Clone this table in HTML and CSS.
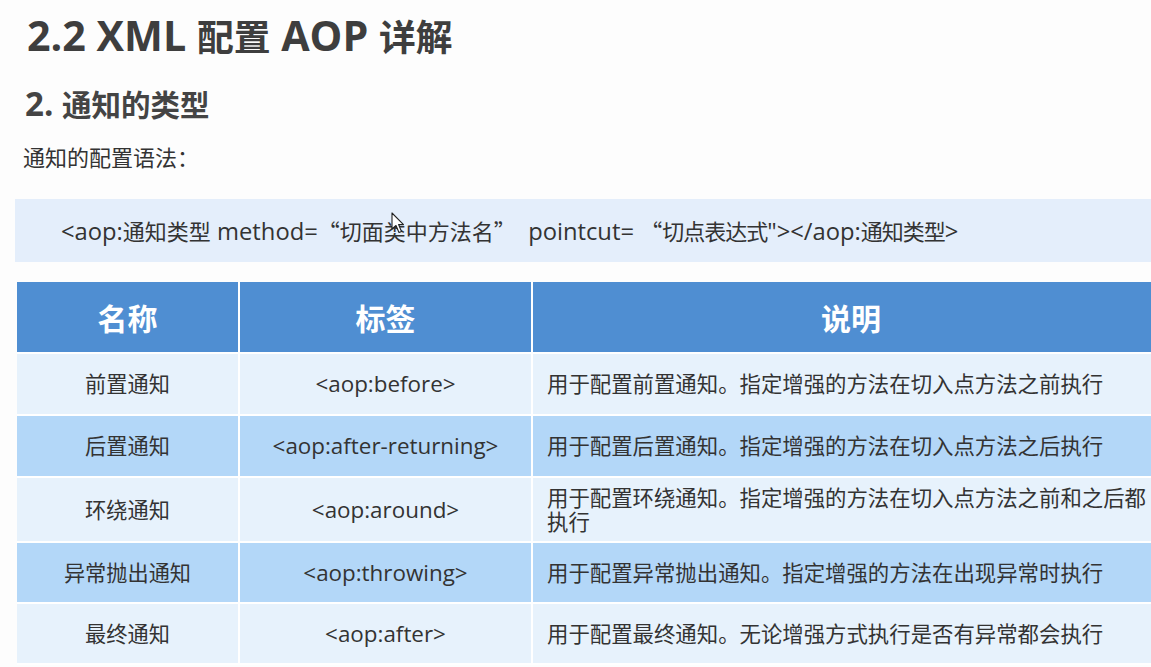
FILE: index.html
```html
<!DOCTYPE html>
<html lang="zh">
<head>
<meta charset="utf-8">
<title>2.2 XML 配置 AOP 详解</title>
<link rel="stylesheet" href="styles.css">
</head>
<body>
<div class="page">
  <h1 class="title"><span class="en">2.2 XML </span>配置<span class="en"> AOP </span>详解</h1>
  <h2 class="subtitle"><span class="en">2. </span>通知的类型</h2>
  <p class="lead">通知的配置语法：</p>
  <div class="code"><span class="en">&lt;aop:</span>通知类型<span class="en"> method=</span>“切面类中方法名”<span class="en">&nbsp; pointcut= </span>“<span class="tight">切点表达式</span><span class="en">"&gt;&lt;/aop:</span><span class="tight">通知类型</span><span class="en">&gt;</span></div>
  <table class="grid">
    <thead>
      <tr><th class="c1">名称</th><th class="c2">标签</th><th class="c3">说明</th></tr>
    </thead>
    <tbody>
      <tr class="light r1"><td>前置通知</td><td class="tag">&lt;aop:before&gt;</td><td class="desc">用于配置前置通知。指定增强的方法在切入点方法之前执行</td></tr>
      <tr class="dark r2"><td>后置通知</td><td class="tag">&lt;aop:after-returning&gt;</td><td class="desc">用于配置后置通知。指定增强的方法在切入点方法之后执行</td></tr>
      <tr class="light r3"><td>环绕通知</td><td class="tag">&lt;aop:around&gt;</td><td class="desc">用于配置环绕通知。指定增强的方法在切入点方法之前和之后都执行</td></tr>
      <tr class="dark r4"><td>异常抛出通知</td><td class="tag">&lt;aop:throwing&gt;</td><td class="desc">用于配置异常抛出通知。指定增强的方法在出现异常时执行</td></tr>
      <tr class="light r5"><td>最终通知</td><td class="tag">&lt;aop:after&gt;</td><td class="desc">用于配置最终通知。无论增强方式执行是否有异常都会执行</td></tr>
    </tbody>
  </table>
  <svg class="cursor" width="14" height="22" viewBox="0 0 14 22"><path d="M1 1 L1 17 L5 13.5 L8 20.5 L10.5 19.5 L7.6 12.6 L12.5 12.6 Z" fill="#fff" stroke="#222" stroke-width="1.1" stroke-linejoin="round"/></svg>
</div>
</body>
</html>
```
FILE: styles.css
```css
html, body {
  margin: 0;
  padding: 0;
  background: #fdfdfd;
  overflow: hidden;
}
body {
  width: 1151px;
  height: 667px;
  font-family: "Open Sans", "Noto Sans CJK SC", sans-serif;
  color: #333;
}
.page {
  position: relative;
  padding-top: 13px;
}
.title {
  margin: 0 0 0 27px;
  font-size: 36.8px;
  line-height: 44px;
  font-weight: 700;
  color: #3e3e3e;
}
.title .en { font-size: 1.12em; }
.subtitle {
  margin: 26px 0 0 25px;
  font-size: 29.5px;
  line-height: 38px;
  font-weight: 700;
  color: #444;
}
.subtitle .en { font-size: 1.12em; }
.lead {
  margin: 18px 0 0 23px;
  font-size: 22px;
  line-height: 30px;
  color: #333;
}
.code {
  margin: 27px 0 0 15px;
  width: 1160px;
  height: 63px;
  box-sizing: border-box;
  padding-left: 46px;
  background: #e4eefb;
  font-family: "Noto Sans CJK SC", sans-serif;
  font-size: 22px;
  line-height: 63px;
  color: #333;
  white-space: nowrap;
}
.code .en {
  font-family: "Open Sans", sans-serif;
  font-size: 1.08em;
}
.code .tight { letter-spacing: -1px; }
.grid {
  margin: 20px 0 0 17px;
  width: 1154px;
  border-collapse: collapse;
  table-layout: fixed;
}
.grid th, .grid td {
  border: 2px solid #fff;
  text-align: center;
  padding: 0;
}
.grid tr > :first-child { border-left: 0; }
.grid thead tr > * { border-top: 0; }
.grid th {
  background: #4f8ed2;
  color: #fff;
  font-size: 30px;
  font-weight: 700;
  height: 70px;
}
.c1 { width: 221px; }
.c2 { width: 291px; }
.grid td {
  font-size: 21.2px;
  line-height: 24px;
  color: #333;
}
.grid td.tag { font-size: 22.4px; }
.grid td.desc {
  text-align: left;
  padding: 0 20px 0 14px;
  font-size: 21.4px;
  line-height: 24px;
}
.light td { background: #e7f2fc; }
.dark td { background: #b3d7f8; }
.r1 td { height: 60px; }
.r2 td { height: 60px; }
.r3 td { height: 63px; }
.r4 td { height: 59px; }
.r5 td { height: 59px; }
.cursor {
  position: absolute;
  left: 391px;
  top: 212px;
}
```
